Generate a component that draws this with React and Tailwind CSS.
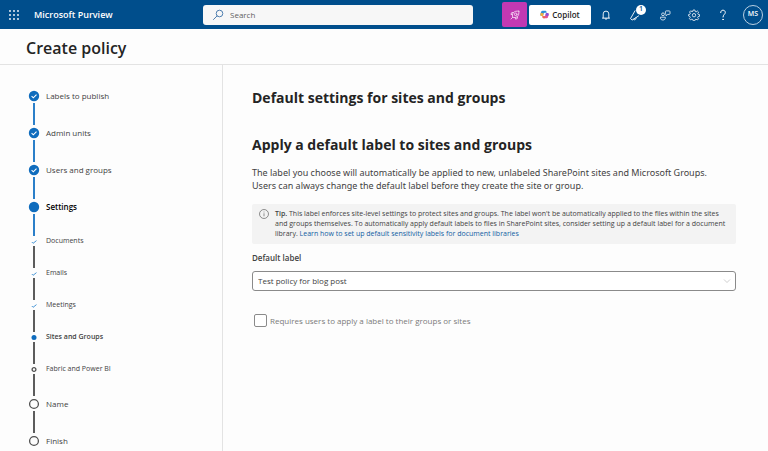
import { useState } from 'react'

const steps = [
  { name: 'Labels to publish', state: 'done' },
  { name: 'Admin units', state: 'done' },
  { name: 'Users and groups', state: 'done' },
  {
    name: 'Settings',
    state: 'current',
    children: [
      { name: 'Documents', state: 'done' },
      { name: 'Emails', state: 'done' },
      { name: 'Meetings', state: 'done' },
      { name: 'Sites and Groups', state: 'current' },
      { name: 'Fabric and Power BI', state: 'todo' }
    ]
  },
  { name: 'Name', state: 'todo' },
  { name: 'Finish', state: 'todo' }
]

const WaffleIcon = () => (
  <svg viewBox="0 0 10 10" className="h-[10px] w-[10px]" fill="currentColor">
    {[1, 5, 9].map((y) => [1, 5, 9].map((x) => <circle key={`${x}-${y}`} cx={x} cy={y} r="0.9" />))}
  </svg>
)

const SearchIcon = () => (
  <svg viewBox="0 0 12 12" className="h-3 w-3 text-[#4f7fb0]" fill="none" stroke="currentColor" strokeWidth="1">
    <circle cx="7.5" cy="4.5" r="3.3" />
    <path d="M5 7L1.500 10.500" strokeLinecap="round" />
  </svg>
)

const RocketIcon = () => (
  <svg viewBox="0 0 12 12" className="h-3 w-3 text-[#f3d3ef]" fill="none" stroke="currentColor" strokeWidth="0.9" strokeLinejoin="round" strokeLinecap="round">
    <path d="M9.800 2.200C7.600 1.900 5.600 2.300 4.400 3.600 3.200 5 3.300 6.600 3.700 8.300c1.700.4 3.300.4 4.600-.7 1.400-1.200 1.800-3.200 1.500-5.400z" />
    <path d="M4.400 3.600L2.800 3.500l-.9 1.800 1.500.5M8.300 7.600l.2 1.700-1.800.9-.6-1.600" />
    <circle cx="6.700" cy="5.300" r="1.300" />
    <path d="M3.700 8.300L2 10" />
  </svg>
)

const CopilotIcon = () => (
  <svg viewBox="0 0 12 12" className="h-[9px] w-[9px]">
    <path d="M3.500 1h3.800c.8 0 1.100.5 1.300 1.200L9 3.600H6.400c-.9 0-1.300.5-1.500 1.200L4 8H2C.8 8 .2 7 .5 5.800l.9-3.300C1.700 1.500 2.500 1 3.500 1z" fill="#2f8fd8" />
    <path d="M.5 5.800l.6-2.200L5 4.700 4 8H2C.8 8 .2 7 .5 5.800z" fill="#f2b13c" />
    <path d="M8.500 11H4.700c-.8 0-1.100-.5-1.300-1.200L3 8.400h2.600c.9 0 1.300-.5 1.500-1.200L8 4h2c1.200 0 1.800 1 1.500 2.200l-.9 3.300c-.3 1-1.100 1.500-2.100 1.500z" fill="#e0559a" />
    <path d="M8 4h2c1.200 0 1.800 1 1.500 2.200l-.5 1.900-3.900-.9z" fill="#8a50d8" />
    <path d="M3 8.400h2.600c.9 0 1.300-.5 1.500-1.200l-.6 3.800H4.700c-.8 0-1.100-.5-1.300-1.200z" fill="#ee6a4b" />
  </svg>
)

const BellIcon = () => (
  <svg viewBox="0 0 12 12" className="h-3 w-3" fill="none" stroke="currentColor" strokeWidth="0.9" strokeLinejoin="round">
    <path d="M3.200 9V4.900a2.800 2.800 0 0 1 5.600 0V9M2.500 9.100h7" strokeLinecap="round" />
    <path d="M5 9.300a1 1 0 0 0 2 0" />
  </svg>
)

const MegaphoneIcon = () => (
  <svg viewBox="0 0 12 12" className="h-3 w-3" fill="none" stroke="currentColor" strokeWidth="0.9" strokeLinejoin="round" strokeLinecap="round">
    <path d="M6 1.800L1.500 9.600l1.600 1.500L9.600 6.900" />
    <path d="M4.500 10.200c.8 1.200 2.600.8 2.600-1.500" />
  </svg>
)

const FeedbackIcon = () => (
  <svg viewBox="0 0 12 12" className="h-3 w-3 text-[#dbe6f0]" fill="none" stroke="currentColor" strokeWidth="0.9" strokeLinejoin="round">
    <circle cx="4" cy="5.300" r="1.400" />
    <path d="M1.500 8.200h4.800v.8c0 1.200-.8 2-2.400 2s-2.400-.8-2.400-2z" />
    <path d="M7.200 1.900h3c.5 0 .8.300.8.800v1.900c0 .5-.3.800-.8.800H8.800L7 6.700V5.400c-.4-.1-.6-.4-.6-.8V2.700c0-.5.300-.8.800-.8z" />
  </svg>
)

const GearIcon = () => (
  <svg viewBox="0 0 12 12" className="h-3 w-3 text-[#dbe6f0]" fill="none" stroke="currentColor" strokeWidth="0.9" strokeLinejoin="round">
    <path d="M5.100 1h1.800l.3 1.500.9.4 1.300-.9 1.200 1.200-.8 1.300.4.9 1.300.2v1.700l-1.400.3-.4.9.8 1.300-1.200 1.200-1.300-.8-.9.4-.2 1.100H5.100l-.3-1.200-.9-.4-1.300.8-1.200-1.200.9-1.300-.4-.9L.6 7V5.500L2 5.200l.4-.9-.9-1.300 1.200-1.200 1.300.9.900-.4z" />
    <circle cx="6" cy="6.200" r="1.700" />
  </svg>
)

const HelpIcon = () => (
  <svg viewBox="0 0 12 12" className="h-3 w-3" fill="none" stroke="currentColor" strokeWidth="1" strokeLinecap="round">
    <path d="M3.700 3.600C3.700 2 4.700 1.200 6 1.200s2.300.9 2.300 2.200C8.300 5.400 6 5.600 6 8" />
    <circle cx="6" cy="10.400" r="0.300" fill="currentColor" />
  </svg>
)

const InfoIcon = () => (
  <svg viewBox="0 0 10 10" className="h-[10px] w-[10px] shrink-0 text-[#616161]" fill="none" stroke="currentColor" strokeWidth="0.7">
    <circle cx="5" cy="5" r="4.500" />
    <path d="M5 4.300v3M5 2.600v.8" />
  </svg>
)

// Round marker for a top level step, dot / tick for a nested one
const Marker = ({ state, nested }) => {
  if (nested) {
    return (
      <svg viewBox="0 0 9 9" className="h-[9px] w-[14px]" fill="none">
        {state === 'done' && <path d="M2.300 5l1.300 1.300 3.400-2.700" stroke="#4a97d6" strokeWidth="1" />}
        {state === 'current' && <circle cx="4.500" cy="4.500" r="2.500" fill="#0f6cbd" />}
        {state === 'todo' && <circle cx="4.500" cy="4.500" r="1.900" stroke="#505050" strokeWidth="1.300" />}
      </svg>
    )
  }
  return (
    <svg viewBox="0 0 14 14" className="h-[14px] w-[14px]" fill="none">
      {state === 'todo' ? (
        <circle cx="7" cy="7" r="4.400" stroke="#505050" strokeWidth="1.300" />
      ) : (
        <circle cx="7" cy="7" r="5.200" fill="#0f6cbd" />
      )}
      {state === 'done' && <path d="M4.600 7.200l1.700 1.600 3.200-3.200" stroke="#fff" strokeWidth="1.100" />}
    </svg>
  )
}

const Step = ({ step, nested, last }) => {
  const current = step.state === 'current'
  const blueLine = !nested && step.state !== 'todo'

  return (
    <li>
      <a
        href="#"
        aria-current={current ? 'step' : undefined}
        className={`flex items-center gap-[5px] ${nested ? 'h-[9px] text-[7px]' : 'h-[14px] text-[8px]'} ${
          current ? 'font-semibold' : ''
        } ${current && !nested ? 'text-black' : 'text-[#424242]'}`}
      >
        <Marker state={step.state} nested={nested} />
        {step.name}
      </a>
      {!last && (
        <div className="flex h-[23px] w-[14px] justify-center">
          <div className={`h-[22px] w-[2px] ${blueLine ? 'bg-[#2b7fc9]' : 'bg-[#5c5c5c]'}`} />
        </div>
      )}
      {step.children && (
        <ol>
          {step.children.map((child) => (
            <Step key={child.name} step={child} nested />
          ))}
        </ol>
      )}
    </li>
  )
}

const Header = () => (
  <header className="flex h-[29px] items-center bg-[#004e8c] text-white">
    <div className="flex w-[203px] shrink-0 items-center gap-[15px] pl-[9px]">
      <button aria-label="App launcher">
        <WaffleIcon />
      </button>
      <span className="text-[9px] font-semibold">Microsoft Purview</span>
    </div>
    <label className="flex h-[20px] min-w-0 flex-1 items-center gap-[6px] rounded-[3px] bg-[#f7f7f7] px-[9px]">
      <SearchIcon />
      <input
        type="text"
        aria-label="Search"
        placeholder="Search"
        className="min-w-0 flex-1 bg-transparent text-[8px] text-[#424242] outline-none placeholder:text-[#616161]"
      />
    </label>
    <div className="ml-[29px] flex shrink-0 items-center pr-[5px]">
      <button aria-label="What's new" className="flex h-[25px] w-[25px] items-center justify-center rounded-[2px] bg-[#c239b3]">
        <RocketIcon />
      </button>
      <button className="ml-[2px] flex h-[20px] w-[62px] items-center justify-center gap-[3px] rounded-[2px] bg-white text-[8px] font-semibold text-[#242424]">
        <CopilotIcon />
        Copilot
      </button>
      <button aria-label="Notifications" className="flex w-[29px] justify-center">
        <BellIcon />
      </button>
      <button aria-label="Announcements" className="relative flex w-[30px] justify-center">
        <MegaphoneIcon />
        <span className="absolute -top-1 right-[4px] flex h-[10px] w-[10px] items-center justify-center rounded-full bg-white text-[7px] font-semibold text-[#004e8c]">
          1
        </span>
      </button>
      <button aria-label="Feedback" className="flex w-[29px] justify-center">
        <FeedbackIcon />
      </button>
      <button aria-label="Settings" className="flex w-[29px] justify-center">
        <GearIcon />
      </button>
      <button aria-label="Help" className="flex w-[30px] justify-center">
        <HelpIcon />
      </button>
      <button
        aria-label="Account"
        className="ml-[5px] flex h-[20px] w-[20px] items-center justify-center rounded-full border border-[#b8cfe2] text-[7px] font-semibold"
      >
        MS
      </button>
    </div>
  </header>
)

export default function App() {
  const [label, setLabel] = useState('Test policy for blog post')
  const [required, setRequired] = useState(false)

  return (
    <div className="flex h-screen flex-col overflow-hidden bg-[#fdfdfd] font-['Open_Sans','Noto_Sans',sans-serif] text-[#242424]">
      <Header />

      <div className="border-b border-[#e3e3e3] px-[26px] pt-[7px] pb-[4px]">
        <h1 className="text-[16px] leading-[24px] font-semibold">Create policy</h1>
      </div>

      <div className="flex min-h-0 flex-1">
        {/* Wizard steps */}
        <nav aria-label="Steps" className="w-[223px] shrink-0 border-r border-[#e3e3e3] pt-[24px] pl-[27px]">
          <ol>
            {steps.map((step, index) => (
              <Step key={step.name} step={step} last={index === steps.length - 1} />
            ))}
          </ol>
        </nav>

        {/* Current page of the wizard */}
        <main className="min-w-0 flex-1 pt-[22px] pr-[32px] pl-[29px]">
          <h2 className="text-[14px] leading-[22px] font-bold">Default settings for sites and groups</h2>
          <h3 className="mt-[25px] text-[14px] leading-[22px] font-bold">Apply a default label to sites and groups</h3>
          <p className="mt-[10px] font-['Noto_Sans',sans-serif] text-[9px] leading-[13px] text-[#424242]">
            The label you choose will automatically be applied to new, unlabeled SharePoint sites and Microsoft Groups.
            <br />
            Users can always change the default label before they create the site or group.
          </p>

          <div className="mt-[12px] flex gap-[6px] rounded-[2px] bg-[#f3f3f3] py-[5px] pr-[4px] pl-[7px]">
            <InfoIcon />
            <p className="text-[7px] leading-[10px] text-[#424242]">
              <span className="font-semibold">Tip.</span> This label enforces site-level settings to protect sites and
              groups. The label won't be automatically applied to the files within the sites and groups themselves. To
              automatically apply default labels to files in SharePoint sites, consider setting up a default label for a
              document library.{' '}
              <a href="#" className="text-[#115ea3]">
                Learn how to set up default sensitivity labels for document libraries
              </a>
            </p>
          </div>

          <label htmlFor="default-label" className="mt-[8px] block text-[8px] leading-[12px] font-semibold text-[#424242]">
            Default label
          </label>
          <div className="relative mt-[7px]">
            <select
              id="default-label"
              value={label}
              onChange={(e) => setLabel(e.target.value)}
              className="block h-[20px] w-full appearance-none rounded-[3px] border border-[#8a8a8a] bg-white px-[5px] text-[8px] text-[#424242]"
            >
              <option>Test policy for blog post</option>
              <option>None</option>
            </select>
            <svg
              viewBox="0 0 8 8"
              className="pointer-events-none absolute top-[6px] right-[5px] h-2 w-2"
              fill="none"
              stroke="#c8c8c8"
              strokeWidth="0.9"
            >
              <path d="M1 2.500l3 3 3-3" />
            </svg>
          </div>

          <div className="mt-[23px] flex items-center gap-[3px] pl-[2px]">
            <input
              id="require-label"
              type="checkbox"
              checked={required}
              onChange={(e) => setRequired(e.target.checked)}
              className="h-[13px] w-[13px] appearance-none rounded-[2px] border border-[#8a8a8a] bg-white checked:bg-[#0f6cbd]"
            />
            <label htmlFor="require-label" className="text-[8px] leading-[12px] text-[#7a7a7a]">
              Requires users to apply a label to their groups or sites
            </label>
          </div>
        </main>
      </div>
    </div>
  )
}
